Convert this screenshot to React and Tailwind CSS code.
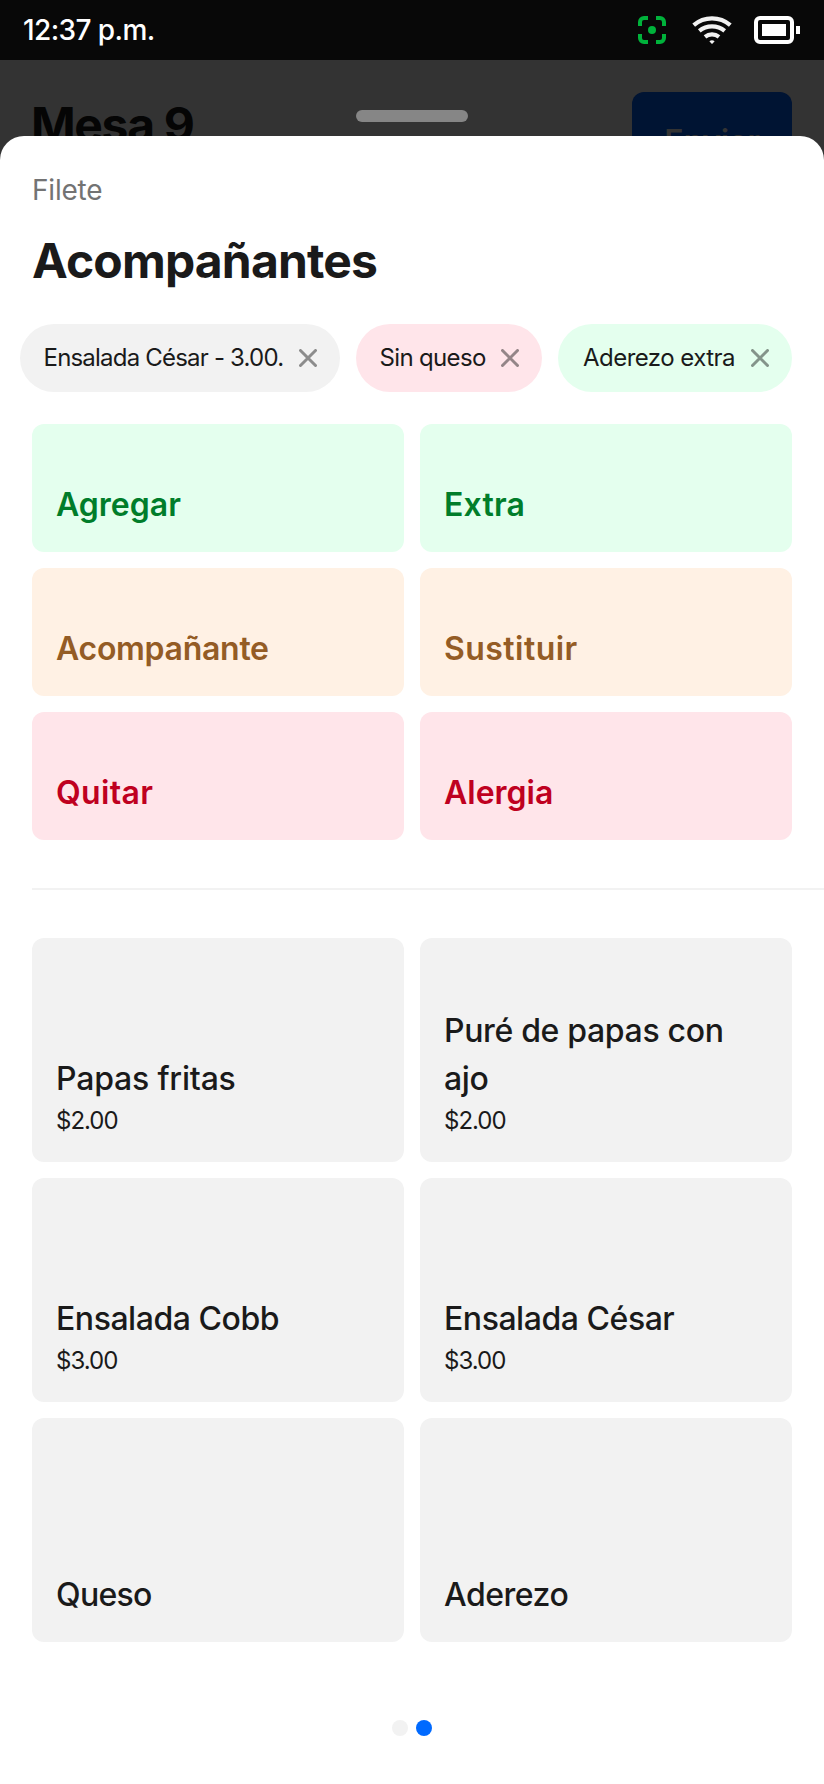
const chips = [
  {
    label: "Ensalada César - 3.00.",
    className: "w-80 bg-[#f2f2f2] tracking-[-0.8px]",
  },
  {
    label: "Sin queso",
    className: "w-[186px] bg-[#ffe5ea] tracking-[-0.66px]",
  },
  {
    label: "Aderezo extra",
    className: "w-[234px] bg-[#e4ffee] pl-[25px] tracking-[-0.54px]",
  },
];

const actions = [
  { label: "Agregar", className: "bg-[#e4ffee] text-[#007d2a]" },
  {
    label: "Extra",
    className: "bg-[#e4ffee] text-[#007d2a] tracking-[0.2px]",
  },
  {
    label: "Acompañante",
    className: "bg-[#fff1e4] text-[#945c25] tracking-[-0.28px]",
  },
  {
    label: "Sustituir",
    className: "bg-[#fff1e4] text-[#945c25] tracking-[0.45px]",
  },
  {
    label: "Quitar",
    className: "bg-[#ffe5ea] text-[#bf0020] tracking-[0.35px]",
  },
  { label: "Alergia", className: "bg-[#ffe5ea] text-[#bf0020]" },
];

const items = [
  { name: "Papas fritas", price: "$2.00", className: "tracking-[-0.2px]" },
  {
    name: "Puré de papas con ajo",
    price: "$2.00",
    className: "tracking-[-0.34px]",
  },
  { name: "Ensalada Cobb", price: "$3.00", className: "tracking-[-0.46px]" },
  { name: "Ensalada César", price: "$3.00", className: "tracking-[-0.46px]" },
  { name: "Queso", className: "tracking-[-0.7px]" },
  { name: "Aderezo", className: "tracking-[-0.5px]" },
];

const ScanIcon = () => (
  <svg width="28" height="28" viewBox="0 0 28 28" fill="none">
    <path
      d="M2 10V6a4 4 0 0 1 4-4h4M18 2h4a4 4 0 0 1 4 4v4M26 18v4a4 4 0 0 1-4 4h-4M10 26H6a4 4 0 0 1-4-4v-4"
      stroke="#00b23b"
      strokeWidth="4"
    />
    <circle cx="14" cy="14" r="4" fill="#00b23b" />
  </svg>
);

const WifiIcon = () => (
  <svg width="40" height="28" viewBox="0 0 40 28" fill="none">
    <g stroke="#f2f2f2" strokeWidth="4.2">
      <path d="M1.7 9.2A28 28 0 0 1 38.3 9.2" />
      <path d="M7.3 14.9A20 20 0 0 1 32.7 14.9" />
      <path d="M13 20.8A11.5 11.5 0 0 1 27 20.8" />
    </g>
    <path
      d="M17.4 25.2Q20 23.2 22.6 25.2L20.6 27.4Q20 28 19.4 27.4Z"
      fill="#f2f2f2"
    />
  </svg>
);

const BatteryIcon = () => (
  <svg width="46" height="28" viewBox="0 0 46 28" fill="none">
    <rect x="2" y="2" width="36" height="24" rx="4" stroke="#fff" strokeWidth="4" />
    <rect x="8" y="8" width="24" height="12" fill="#fff" />
    <rect x="42" y="10" width="4" height="8" fill="#fff" />
  </svg>
);

const CloseIcon = () => (
  <svg width="18" height="18" viewBox="0 0 18 18" fill="none">
    <path
      d="M1.5 1.5l15 15M16.5 1.5l-15 15"
      stroke="#000"
      strokeOpacity="0.42"
      strokeWidth="3"
      strokeLinecap="round"
    />
  </svg>
);

const StatusBar = () => (
  <div className="flex h-[60px] shrink-0 items-center justify-between bg-[#080808] pl-[23px] pr-6 text-white">
    <span className="text-[28px] font-medium leading-9 tracking-[-0.6px]">
      12:37 p.m.
    </span>
    <div className="flex items-center">
      <ScanIcon />
      <div className="ml-[26px] mr-[22px]">
        <WifiIcon />
      </div>
      <BatteryIcon />
    </div>
  </div>
);

const App = () => {
  return (
    <div className="flex h-[1784px] w-[824px] flex-col overflow-hidden bg-white font-['Inter',sans-serif] text-[#1a1a1a]">
      <StatusBar />

      {/* Dimmed page behind the sheet */}
      <div className="relative flex h-[100px] shrink-0 items-start justify-between overflow-hidden bg-[#333] px-8 pt-8">
        <h2 className="-ml-px pt-[3px] text-5xl font-bold leading-[60px] tracking-[-1.35px] text-[#050505]">
          Mesa 9
        </h2>
        <button className="h-[100px] w-40 rounded-xl bg-[#001433] text-[32px] font-semibold tracking-[-0.2px] text-[#333]">
          Enviar
        </button>
        <div className="absolute left-1/2 top-[50px] h-3 w-28 -translate-x-1/2 rounded-full bg-[#868686]" />
      </div>

      {/* Sheet */}
      <main className="relative -mt-6 flex flex-1 flex-col rounded-t-3xl bg-white pt-9">
        <div className="px-8">
          <p className="text-[28px] leading-9 tracking-[-0.2px] text-[#737373]">
            Filete
          </p>
          <h1 className="mt-[23px] text-5xl font-bold leading-[60px] tracking-[-0.83px]">
            Acompañantes
          </h1>
        </div>

        <div className="mt-[33px] flex gap-4 pl-5">
          {chips.map((chip) => (
            <div
              key={chip.label}
              className={`flex h-[68px] items-center justify-between whitespace-nowrap rounded-full pl-[23.5px] pr-[23px] text-2xl ${chip.className}`}
            >
              {chip.label}
              <CloseIcon />
            </div>
          ))}
        </div>

        <div className="mt-8 grid grid-cols-2 gap-4 px-8">
          {actions.map((action) => (
            <button
              key={action.label}
              className={`flex h-32 items-end rounded-xl px-6 pb-[23px] text-left text-[32px] font-semibold leading-[48px] ${action.className}`}
            >
              {action.label}
            </button>
          ))}
        </div>

        <div className="ml-8 mt-12 h-0.5 shrink-0 bg-[#f2f2f2]" />

        <div className="mt-12 grid grid-cols-2 gap-4 px-8">
          {items.map((item) => (
            <button
              key={item.name}
              className="flex h-56 flex-col justify-end rounded-xl bg-[#f2f2f2] px-6 pb-[23px] text-left"
            >
              <span
                className={`text-[32px] font-medium leading-[48px] ${item.className}`}
              >
                {item.name}
              </span>
              {item.price && (
                <span className="text-2xl leading-9 tracking-[-1px]">
                  {item.price}
                </span>
              )}
            </button>
          ))}
        </div>

        {/* Page dots */}
        <div className="mt-[78px] flex justify-center gap-2">
          <span className="size-4 rounded-full bg-[#f2f2f2]" />
          <span className="size-4 rounded-full bg-[#006aff]" />
        </div>
      </main>
    </div>
  );
};

export default App;
